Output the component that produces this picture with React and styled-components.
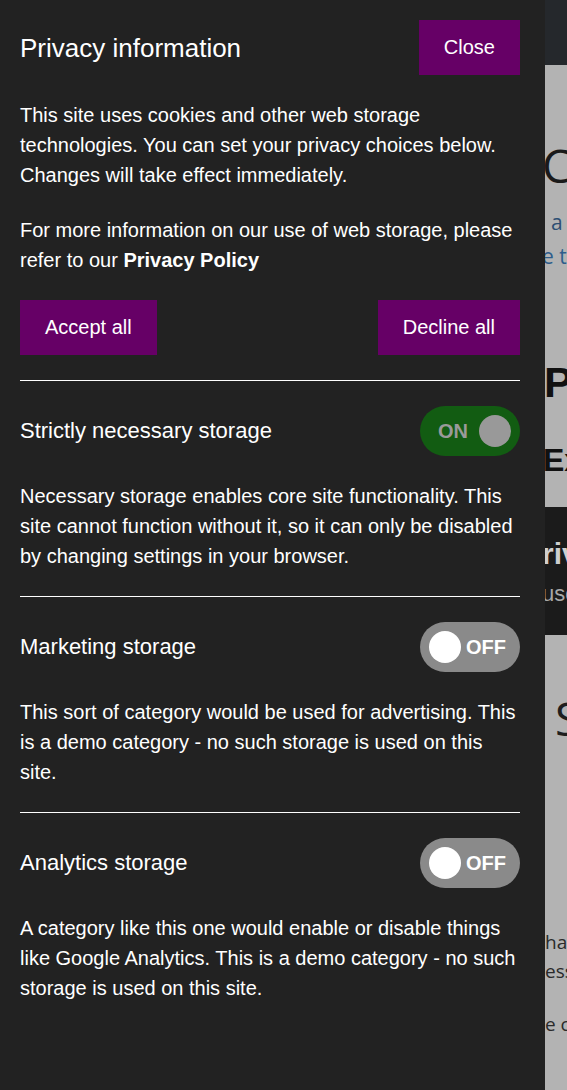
import React from "react";
import styled, { createGlobalStyle } from "styled-components";

const categories = [
  {
    name: "Strictly necessary storage",
    on: true,
    text: "Necessary storage enables core site functionality. This site cannot function without it, so it can only be disabled by changing settings in your browser.",
  },
  {
    name: "Marketing storage",
    on: false,
    text: "This sort of category would be used for advertising. This is a demo category - no such storage is used on this site.",
  },
  {
    name: "Analytics storage",
    on: false,
    text: "A category like this one would enable or disable things like Google Analytics. This is a demo category - no such storage is used on this site.",
  },
];

const App = () => {
  return (
    <>
      <GlobalStyle />
      <Page>
        <TopBar />
        <Behind>
          <BigLine>Cookies</BigLine>
          <SmallLine $mt={15} $ml={6} $color="#2d4f73">a website</SmallLine>
          <SmallLine $ml={-3} $color="#2d5d8c">e text</SmallLine>
          <HeadLine>Privacy</HeadLine>
          <SubLine>Example</SubLine>
          <DarkBand>
            <BandTitle>rivacy</BandTitle>
            <BandText>use</BandText>
          </DarkBand>
          <SectionLine>' Storage</SectionLine>
          <BodyLine $mt={182}>ha</BodyLine>
          <BodyLine>ess</BodyLine>
          <BodyLine $mt={24}>e c</BodyLine>
        </Behind>
      </Page>

      <Panel>
        <Header>
          <Title>Privacy information</Title>
          <Button>Close</Button>
        </Header>
        <Text>
          This site uses cookies and other web storage technologies. You can
          set your privacy choices below. Changes will take effect immediately.
        </Text>
        <Text>
          For more information on our use of web storage, please refer to our{" "}
          <strong>Privacy Policy</strong>
        </Text>
        <ButtonRow>
          <Button>Accept all</Button>
          <Button>Decline all</Button>
        </ButtonRow>
        {categories.map((c) => (
          <React.Fragment key={c.name}>
            <Rule />
            <CategoryRow>
              <CategoryName>{c.name}</CategoryName>
              <Toggle $on={c.on}>
                {c.on ? (
                  <>
                    <ToggleLabel $on>ON</ToggleLabel>
                    <Knob $on />
                  </>
                ) : (
                  <>
                    <Knob />
                    <ToggleLabel>OFF</ToggleLabel>
                  </>
                )}
              </Toggle>
            </CategoryRow>
            <Text>{c.text}</Text>
          </React.Fragment>
        ))}
      </Panel>
    </>
  );
};

export default App;

const GlobalStyle = createGlobalStyle`
  html, body {
    margin: 0;
    padding: 0;
    height: 100%;
    overflow: hidden;
  }
  body {
    font-family: "Liberation Sans", Arial, sans-serif;
  }
`;

const Page = styled.div`
  min-height: 100vh;
  background: #b3b3b3;
  display: flex;
  flex-direction: column;
`;

const TopBar = styled.div`
  height: 65px;
  background: #25282c;
`;

const Behind = styled.div`
  display: flex;
  flex-direction: column;
  padding-left: 545px;
  white-space: nowrap;
  overflow: hidden;
  font-family: "Open Sans", sans-serif;
  color: #222;
`;

const BigLine = styled.div`
  margin-top: 75px;
  margin-left: -3px;
  font-size: 46px;
  font-weight: 400;
  line-height: 50px;
  height: 50px;
  color: #1a1a1a;
`;

const SmallLine = styled.div`
  margin-top: ${(p) => p.$mt || 0}px;
  margin-left: ${(p) => p.$ml || 0}px;
  font-size: 21px;
  line-height: 34px;
  height: 34px;
  color: ${(p) => p.$color};
`;

const HeadLine = styled.div`
  margin-top: 84px;
  margin-left: -1px;
  font-family: "Liberation Sans", sans-serif;
  font-size: 43px;
  font-weight: 700;
  line-height: 50px;
  height: 50px;
  color: #111;
`;

const SubLine = styled.div`
  margin-top: 33px;
  margin-left: -2px;
  font-family: "Liberation Sans", sans-serif;
  font-size: 32px;
  font-weight: 700;
  line-height: 40px;
  height: 40px;
  color: #111;
`;

const DarkBand = styled.div`
  margin-top: 27px;
  margin-left: -545px;
  padding-left: 545px;
  height: 128px;
  background: #1b1b1b;
  display: flex;
  flex-direction: column;
`;

const BandTitle = styled.div`
  margin-top: 30px;
  margin-left: -3px;
  font-family: "Liberation Sans", sans-serif;
  font-size: 30px;
  font-weight: 700;
  line-height: 34px;
  color: #cfcfcf;
`;

const BandText = styled.div`
  margin-top: 9px;
  margin-left: -3px;
  font-family: "Liberation Sans", sans-serif;
  font-size: 22px;
  line-height: 28px;
  color: #a8a8a8;
`;

const SectionLine = styled.div`
  margin-top: 55px;
  margin-left: -12px;
  font-size: 46px;
  line-height: 56px;
  height: 56px;
  color: #1e1e1e;
`;

const BodyLine = styled.div`
  margin-top: ${(p) => p.$mt || 0}px;
  font-size: 19px;
  line-height: 29px;
  height: 29px;
  color: #2a2a2a;
`;

const Panel = styled.div`
  position: fixed;
  top: 0;
  left: 0;
  bottom: 0;
  width: 545px;
  box-sizing: border-box;
  padding: 20px 25px 20px 20px;
  background: #222222;
  color: #ffffff;
  font-family: "Liberation Sans", Arial, sans-serif;
  font-size: 20px;
  line-height: 30px;
  display: flex;
  flex-direction: column;
  gap: 25px;
  overflow: hidden;
`;

const Header = styled.div`
  display: flex;
  justify-content: space-between;
  align-items: center;
`;

const Title = styled.h2`
  margin: 0;
  font-size: 26px;
  font-weight: 400;
  line-height: 30px;
`;

const Button = styled.button`
  height: 55px;
  padding: 0 25px;
  border: none;
  border-radius: 0;
  background: #660066;
  color: #ffffff;
  font-family: "Liberation Sans", Arial, sans-serif;
  font-size: 20px;
  cursor: pointer;
`;

const Text = styled.p`
  margin: 0;
`;

const ButtonRow = styled.div`
  display: flex;
  justify-content: space-between;
`;

const Rule = styled.hr`
  margin: 0;
  border: none;
  border-top: 1px solid #ffffff;
  height: 0;
`;

const CategoryRow = styled.div`
  display: flex;
  justify-content: space-between;
  align-items: center;
`;

const CategoryName = styled.span`
  font-size: 22px;
`;

const Toggle = styled.div`
  width: 100px;
  height: 50px;
  box-sizing: border-box;
  border-radius: 25px;
  display: flex;
  align-items: center;
  justify-content: space-between;
  padding: ${(p) => (p.$on ? "0 9px 0 18px" : "0 14px 0 9px")};
  background: ${(p) => (p.$on ? "#125c12" : "#8a8a8a")};
`;

const Knob = styled.span`
  width: 32px;
  height: 32px;
  border-radius: 50%;
  background: ${(p) => (p.$on ? "#999999" : "#ffffff")};
`;

const ToggleLabel = styled.span`
  font-size: 20px;
  font-weight: 700;
  color: ${(p) => (p.$on ? "#9a9a9a" : "#ffffff")};
`;
